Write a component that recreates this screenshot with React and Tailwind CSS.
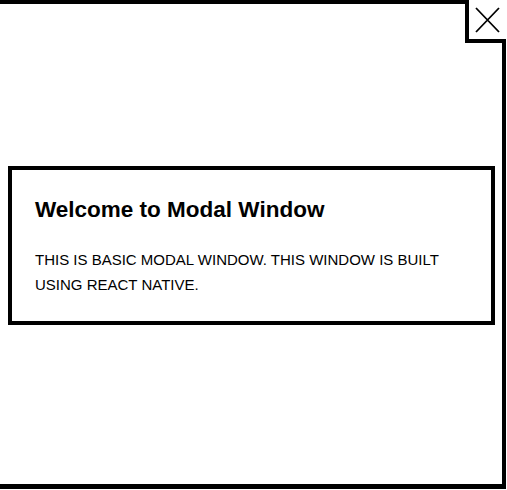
import React from "react";

const CloseIcon = () => (
  <svg width="25" height="26" viewBox="0 0 25 26" fill="none">
    <path d="M1 1 L24 25 M24 1 L1 25" stroke="#000" strokeWidth="1.8" />
  </svg>
);

const ModalWindow = () => {
  return (
    <div className="relative w-[506px] h-[489px] bg-white border-t-4 border-r-4 border-b-[5px] border-black">
      <button className="absolute -top-1 -right-1 w-[41px] h-[43px] bg-white border-l-4 border-b-4 border-black flex items-center justify-center">
        <CloseIcon />
      </button>

      <div className="ml-2 mt-[162px] w-[487px] h-[159px] border-4 border-black pl-[23px] pt-[26px] pr-6">
        <h2 className="text-[22.5px] leading-7 font-bold text-black">
          Welcome to Modal Window
        </h2>
        <p className="mt-[23px] text-[15px] leading-[25px] text-black">
          THIS IS BASIC MODAL WINDOW. THIS WINDOW IS BUILT USING REACT NATIVE.
        </p>
      </div>
    </div>
  );
};

export default function App() {
  return (
    <div
      className="w-[507px] h-[490px] bg-white"
      style={{ fontFamily: '"Liberation Sans", Arial, sans-serif' }}
    >
      <ModalWindow />
    </div>
  );
}
